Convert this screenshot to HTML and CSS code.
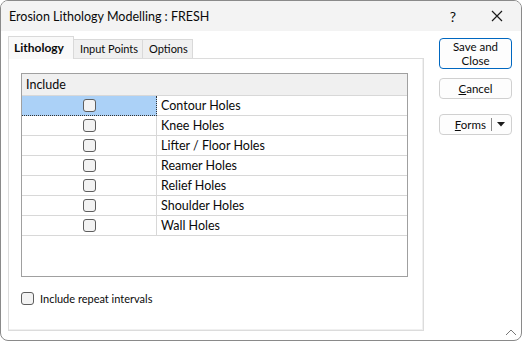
FILE: index.html
```html
<!DOCTYPE html>
<html lang="en">
<head>
  <meta charset="UTF-8">
  <title>Erosion Lithology Modelling : FRESH</title>
  <link rel="stylesheet" href="styles.css">
</head>
<body>

  <div class="window">

    <div class="titlebar">
      <span class="title">Erosion Lithology Modelling : FRESH</span>
      <span class="help">?</span>
      <svg class="close" width="12" height="12" viewBox="0 0 12 12">
        <path d="M1 1 L11 11 M11 1 L1 11" stroke="#1a1a1a" stroke-width="1.2" fill="none"/>
      </svg>
    </div>

    <div class="content">

      <div class="main">
        <div class="tabs">
          <div class="tab active">Lithology</div>
          <div class="tab">Input Points</div>
          <div class="tab">Options</div>
        </div>

        <div class="panel">
          <div class="grid">
            <div class="grid-header">Include</div>
            <div class="grid-row">
              <div class="cell-check selected"><span class="box"></span></div>
              <div class="cell-name">Contour Holes</div>
            </div>
            <div class="grid-row">
              <div class="cell-check"><span class="box"></span></div>
              <div class="cell-name">Knee Holes</div>
            </div>
            <div class="grid-row">
              <div class="cell-check"><span class="box"></span></div>
              <div class="cell-name">Lifter / Floor Holes</div>
            </div>
            <div class="grid-row">
              <div class="cell-check"><span class="box"></span></div>
              <div class="cell-name">Reamer Holes</div>
            </div>
            <div class="grid-row">
              <div class="cell-check"><span class="box"></span></div>
              <div class="cell-name">Relief Holes</div>
            </div>
            <div class="grid-row">
              <div class="cell-check"><span class="box"></span></div>
              <div class="cell-name">Shoulder Holes</div>
            </div>
            <div class="grid-row">
              <div class="cell-check"><span class="box"></span></div>
              <div class="cell-name">Wall Holes</div>
            </div>
          </div>

          <label class="repeat">
            <span class="box"></span>
            Include repeat intervals
          </label>
        </div>
      </div>

      <div class="side">
        <button class="btn default">Save and<br>Close</button>
        <button class="btn"><u>C</u>ancel</button>
        <button class="btn forms">
          <span class="forms-label"><u>F</u>orms</span>
          <span class="forms-sep"></span>
          <svg width="8" height="5" viewBox="0 0 8 5"><path d="M0 0 H8 L4 4.5 Z" fill="#1a1a1a"/></svg>
        </button>
      </div>

    </div>

    <svg class="grip" width="12" height="8" viewBox="0 0 12 8">
      <path d="M1 7 L6 2 L11 7" stroke="#777" stroke-width="1" fill="none"/>
    </svg>

  </div>

</body>
</html>
```

FILE: styles.css
```css
body {
  margin: 0;
  font-family: Lato, "Noto Sans", sans-serif;
  font-size: 12px;
  color: #0a0a0a;
  background: #fff;
}

.window {
  position: relative;
  width: 522px;
  height: 341px;
  box-sizing: border-box;
  border: 1px solid #8a8a8a;
  border-radius: 8px;
  overflow: hidden;
  display: flex;
  flex-direction: column;
  background: #fff;
}

.titlebar {
  height: 30px;
  background: #f3f3f3;
  display: flex;
  align-items: center;
  padding-left: 8px;
  flex-shrink: 0;
}

.title {
  flex: 1;
  font-size: 12.5px;
}

.help {
  font-size: 14px;
  margin-right: 35px;
}

.close {
  margin-right: 18px;
}

.content {
  flex: 1;
  display: flex;
  padding: 5px 0 0 7px;
}

.main {
  width: 416px;
  display: flex;
  flex-direction: column;
}

.tabs {
  display: flex;
  align-items: flex-end;
  height: 22px;
  position: relative;
  z-index: 1;
}

.tab {
  height: 19px;
  line-height: 18px;
  padding: 0 4px 0 6px;
  font-size: 11px;
  background: #f0f0f0;
  border: 1px solid #d9d9d9;
  border-bottom: none;
  box-sizing: border-box;
  margin-left: -1px;
}

.tab:first-child {
  margin-left: 0;
}

.tab.active {
  height: 23px;
  line-height: 22px;
  font-size: 12px;
  font-weight: bold;
  background: #f9f9f9;
  margin-bottom: -1px;
  padding: 0 9px 0 5px;
}

.panel {
  width: 416px;
  height: 273px;
  box-sizing: border-box;
  border: 1px solid #dcdcdc;
  box-shadow: inset -1px -1px 0 #f0f0f0;
  padding: 14px 15px 0 12px;
}

.grid {
  height: 204px;
  box-sizing: border-box;
  border: 1px solid #a0a0a0;
  font-size: 12.5px;
}

.grid-header {
  height: 22px;
  line-height: 21px;
  background: #f0f0f0;
  border-bottom: 1px solid #d8d8d8;
  padding-left: 4px;
  box-sizing: border-box;
}

.grid-row {
  display: flex;
  height: 20px;
  border-bottom: 1px solid #d8d8d8;
  box-sizing: border-box;
}

.cell-check {
  width: 134px;
  border-right: 1px solid #d8d8d8;
  display: flex;
  align-items: center;
  justify-content: center;
}

.cell-check.selected {
  background: #abd1f7;
  border-right: 1px dotted #333;
  border-bottom: 1px dotted #333;
  margin-bottom: -1px;
}

.cell-name {
  padding-left: 4px;
  line-height: 19px;
}

.box {
  display: inline-block;
  width: 13px;
  height: 13px;
  box-sizing: border-box;
  border: 1px solid #5e5e5e;
  border-radius: 3px;
  background: #f3f3f3;
}

.repeat {
  display: flex;
  align-items: center;
  gap: 6px;
  margin-top: 15px;
  font-size: 11px;
}

.side {
  display: flex;
  flex-direction: column;
  padding-left: 15px;
  padding-top: 2px;
}

.btn {
  width: 73px;
  height: 21px;
  font-family: inherit;
  font-size: 11.5px;
  color: #0a0a0a;
  background: #fdfdfd;
  border: 1px solid #d0d0d0;
  border-radius: 4px;
  padding: 0;
  margin-bottom: 9px;
  line-height: 14px;
}

.btn.default {
  height: 31px;
  border-color: #0067c0;
}

.btn.forms {
  margin-top: 6px;
  display: flex;
  align-items: center;
  padding: 0 6px 0 0;
}

.forms-label {
  flex: 1;
  text-align: right;
  padding-right: 5px;
}

.forms-sep {
  width: 1px;
  height: 13px;
  background: #8a8a8a;
  margin-right: 5px;
}

.grip {
  position: absolute;
  right: 4px;
  bottom: 4px;
}
```
